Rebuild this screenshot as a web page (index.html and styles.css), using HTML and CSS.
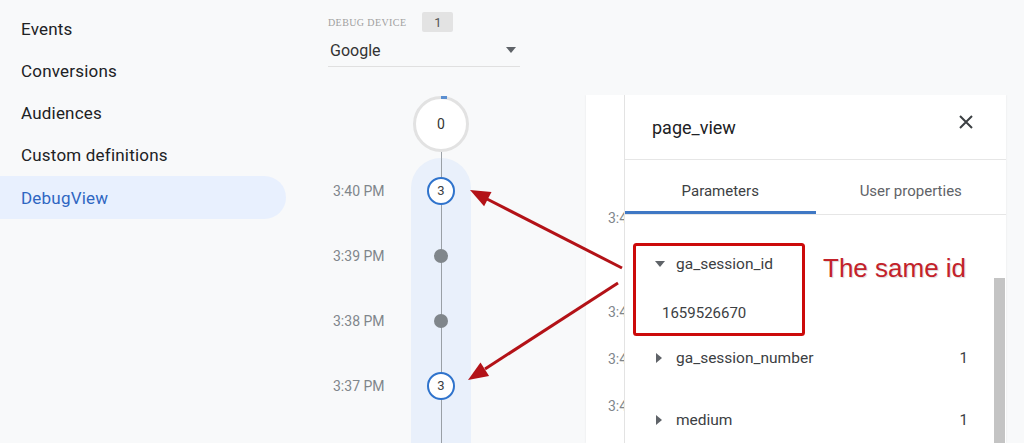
FILE: index.html
```html
<!DOCTYPE html>
<html lang="en">
<head>
    <meta charset="UTF-8">
    <meta name="viewport" content="width=device-width, initial-scale=1.0">
    <title>DebugView</title>
    <link rel="stylesheet" href="styles.css">
</head>
<body>
    <div class="page">
        <!-- Menú lateral -->
        <nav class="sidebar">
            <a class="nav-item">Events</a>
            <a class="nav-item">Conversions</a>
            <a class="nav-item">Audiences</a>
            <a class="nav-item">Custom definitions</a>
            <a class="nav-item active">DebugView</a>
        </nav>

        <div class="main">
            <div class="device">
                <div class="device-label">
                    <span class="label-text">Debug device</span>
                    <span class="badge">1</span>
                </div>
                <div class="select">
                    <span>Google</span>
                    <span class="caret"></span>
                </div>
            </div>

            <div class="content">
                <div class="timeline">
                    <div class="tl-zero">
                        <span class="zero-cell"><span class="zero">0</span></span>
                    </div>
                    <div class="tl-row first">
                        <span class="time">3:40 PM</span>
                        <span class="node"><span class="ring">3</span></span>
                    </div>
                    <div class="tl-row">
                        <span class="time">3:39 PM</span>
                        <span class="node"><span class="dot"></span></span>
                    </div>
                    <div class="tl-row">
                        <span class="time">3:38 PM</span>
                        <span class="node"><span class="dot"></span></span>
                    </div>
                    <div class="tl-row">
                        <span class="time">3:37 PM</span>
                        <span class="node"><span class="ring">3</span></span>
                    </div>
                    <div class="tl-row">
                        <span class="time"></span>
                        <span class="node"></span>
                    </div>
                </div>

                <div class="card">
                    <div class="strip">
                        <div>3:4</div>
                        <div class="hidden">3:4</div>
                        <div>3:4</div>
                        <div>3:4</div>
                        <div>3:4</div>
                    </div>
                    <div class="panel">
                        <div class="panel-head">
                            <span class="event-name">page_view</span>
                            <svg class="close" width="14" height="14" viewBox="0 0 14 14">
                                <path d="M1 1 L13 13 M13 1 L1 13" stroke="#3c4043" stroke-width="2" fill="none"/>
                            </svg>
                        </div>
                        <div class="tabs">
                            <div class="tab active">Parameters</div>
                            <div class="tab">User properties</div>
                        </div>
                        <div class="params">
                            <div class="param">
                                <span class="tri down"></span>
                                <span class="pname">ga_session_id</span>
                            </div>
                            <div class="pvalue">1659526670</div>
                            <div class="param">
                                <span class="tri"></span>
                                <span class="pname">ga_session_number</span>
                                <span class="count">1</span>
                            </div>
                            <div class="param">
                                <span class="tri"></span>
                                <span class="pname">medium</span>
                                <span class="count">1</span>
                            </div>
                        </div>
                        <div class="scroll-thumb"></div>
                    </div>
                </div>
            </div>
        </div>
    </div>

    <!-- Anotaciones sobre la captura -->
    <div class="annot">
        <svg width="1024" height="443" viewBox="0 0 1024 443">
            <rect x="634.5" y="244.5" width="169" height="90" rx="2" fill="none" stroke="#cc0a0a" stroke-width="3"/>
            <line x1="622" y1="268" x2="487" y2="199" stroke="#b31217" stroke-width="3"/>
            <polygon points="470,190 491.5,192 484.1,206.2" fill="#b31217"/>
            <line x1="618" y1="283" x2="485" y2="369" stroke="#b31217" stroke-width="3"/>
            <polygon points="468,380 489.1,375.9 480.5,362.4" fill="#b31217"/>
        </svg>
        <div class="note">The same id</div>
    </div>
</body>
</html>
```

FILE: styles.css
```css
body {
    margin: 0;
    font-family: Roboto, Arial, sans-serif;
    background-color: #f8f9fa;
    color: #202124;
    overflow: hidden;
}
.page {
    display: flex;
    height: 443px;
    overflow: hidden;
}

/* Menú lateral */
.sidebar {
    width: 300px;
    flex-shrink: 0;
    padding-top: 8px;
    display: flex;
    flex-direction: column;
}
.nav-item {
    height: 42px;
    width: 286px;
    box-sizing: border-box;
    padding-left: 21px;
    display: flex;
    align-items: center;
    font-size: 17px;
    color: #202124;
    letter-spacing: 0.2px;
}
.nav-item.active {
    height: 43px;
    background-color: #e8f0fe;
    color: #2f66c2;
    border-radius: 0 22px 22px 0;
}

.main {
    flex: 1;
    display: flex;
    flex-direction: column;
    overflow: hidden;
}

/* Selector de dispositivo */
.device {
    padding: 12px 0 0 28px;
    width: 192px;
}
.device-label {
    display: flex;
    align-items: center;
    height: 20px;
}
.label-text {
    font-family: "Liberation Serif", serif;
    font-size: 10px;
    text-transform: uppercase;
    letter-spacing: 0.4px;
    color: #a0a0a0;
}
.badge {
    margin-left: 16px;
    width: 31px;
    height: 20px;
    background-color: #e3e3e3;
    border-radius: 2px;
    display: flex;
    align-items: center;
    justify-content: center;
    font-size: 13px;
    color: #555;
}
.select {
    margin-top: 6px;
    height: 24px;
    padding: 0 4px 4px 2px;
    display: flex;
    align-items: center;
    justify-content: space-between;
    border-bottom: 1px solid #e0e0e0;
    font-size: 16px;
    color: #333;
}
.caret {
    width: 0;
    height: 0;
    border-left: 5px solid transparent;
    border-right: 5px solid transparent;
    border-top: 6px solid #5f6368;
}

.content {
    display: flex;
    margin-top: 28px;
    flex: 1;
    min-height: 0;
    overflow: hidden;
}

/* Línea de tiempo */
.timeline {
    width: 286px;
    flex-shrink: 0;
    margin-top: 1px;
}
.tl-zero,
.tl-row {
    display: grid;
    grid-template-columns: 111px 60px;
}
.zero-cell {
    grid-column: 2;
    height: 62px;
    display: flex;
    justify-content: center;
    background: linear-gradient(#9aa0a6, #9aa0a6) center bottom / 1px 8px no-repeat;
}
.zero {
    position: relative;
    width: 56px;
    height: 56px;
    box-sizing: border-box;
    border: 3px solid #e2e2e2;
    border-radius: 50%;
    background-color: #fff;
    display: flex;
    align-items: center;
    justify-content: center;
    font-size: 14px;
    color: #333;
}
.zero::after {
    content: "";
    position: absolute;
    top: -3px;
    left: 25px;
    width: 6px;
    height: 3px;
    background-color: #5b8fd0;
}
.tl-row {
    height: 65px;
    align-items: center;
}
.time {
    padding-left: 33px;
    font-size: 14px;
    color: #80868b;
}
.node {
    height: 65px;
    display: flex;
    align-items: center;
    justify-content: center;
    background: linear-gradient(#9aa0a6, #9aa0a6) center / 1px 100% no-repeat, #e9f0fb;
}
.tl-row.first .node {
    border-radius: 30px 30px 0 0;
}
.ring {
    width: 28px;
    height: 28px;
    box-sizing: border-box;
    border: 2px solid #2f73cc;
    border-radius: 50%;
    background-color: #fff;
    display: flex;
    align-items: center;
    justify-content: center;
    font-size: 13px;
    color: #3c4043;
}
.dot {
    width: 14px;
    height: 14px;
    border-radius: 50%;
    background-color: #80868b;
}

/* Tarjeta de detalle */
.card {
    width: 420px;
    flex-shrink: 0;
    background-color: #fff;
    display: flex;
    box-shadow: 0 0 2px rgba(0, 0, 0, 0.08);
}
.strip {
    width: 38px;
    overflow: hidden;
    white-space: nowrap;
    padding: 100px 0 0 22px;
    box-sizing: border-box;
    font-size: 14px;
    color: #80868b;
}
.strip div {
    height: 47px;
    line-height: 47px;
}
.strip .hidden {
    visibility: hidden;
}
.panel {
    position: relative;
    flex: 1;
    border-left: 1px solid #e3e3e3;
}
.panel-head {
    height: 64px;
    border-bottom: 1px solid #e6e6e6;
    display: flex;
    align-items: center;
    justify-content: space-between;
    padding: 0 33px 0 27px;
}
.event-name {
    font-size: 18px;
    color: #202124;
}
.close {
    margin-top: -10px;
}
.tabs {
    display: flex;
    border-bottom: 1px solid #e6e6e6;
}
.tab {
    flex: 1;
    height: 54px;
    padding-top: 8px;
    box-sizing: border-box;
    display: flex;
    align-items: center;
    justify-content: center;
    font-size: 15px;
    color: #5f6368;
}
.tab.active {
    color: #3c4043;
    box-shadow: inset 0 -3px 0 #3f78c4;
}
.params {
    padding-top: 18px;
}
.param {
    height: 62px;
    display: flex;
    align-items: center;
    padding: 0 38px 0 30px;
    font-size: 15.5px;
    color: #3c4043;
}
.tri {
    width: 0;
    height: 0;
    border-top: 5px solid transparent;
    border-bottom: 5px solid transparent;
    border-left: 6px solid #5f6368;
    margin: 0 14px 0 1px;
}
.tri.down {
    border-left: 5px solid transparent;
    border-right: 5px solid transparent;
    border-top: 6px solid #5f6368;
    border-bottom: none;
    margin: 0 11px 0 0;
}
.pname {
    flex: 1;
}
.count {
    font-size: 15px;
}
.pvalue {
    height: 32px;
    display: flex;
    align-items: center;
    padding: 3px 0 0 37px;
    box-sizing: border-box;
    font-size: 15px;
    color: #3c4043;
}
.scroll-thumb {
    position: absolute;
    top: 183px;
    right: 1px;
    width: 11px;
    height: 200px;
    background-color: #c4c4c4;
}

/* Anotaciones */
.annot {
    position: absolute;
    top: 0;
    left: 0;
    width: 1024px;
    height: 443px;
    pointer-events: none;
}
.annot svg {
    display: block;
}
.note {
    position: absolute;
    left: 823px;
    top: 253px;
    font-family: "Liberation Sans", Arial, sans-serif;
    font-size: 26px;
    line-height: 30px;
    color: #c3222a;
    text-shadow: 1px 1px 1px rgba(0, 0, 0, 0.15);
}
```
